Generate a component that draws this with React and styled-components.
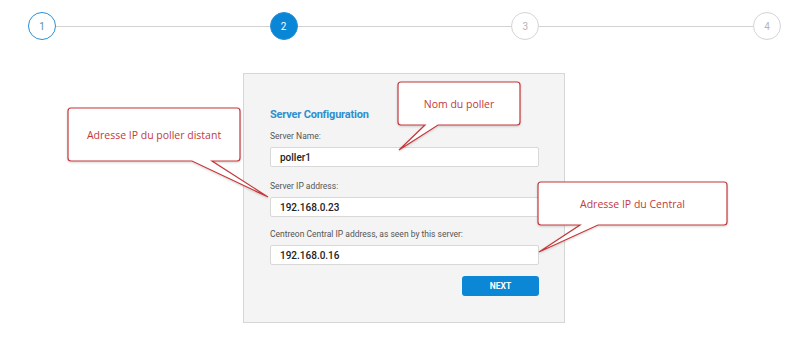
import React from 'react'
import styled, { createGlobalStyle } from 'styled-components'

const GlobalStyle = createGlobalStyle`
	html, body {
		margin: 0;
		padding: 0;
		background: #ffffff;
	}
	body {
		font-family: Roboto, "Liberation Sans", Arial, sans-serif;
	}
`

const Page = styled.div`
	position: relative;
	width: 800px;
	height: 342px;
	overflow: hidden;
	background: #ffffff;
`

const Stepper = styled.div`
	display: flex;
	align-items: center;
	padding: 12px 19px 0 28px;
`

const Step = styled.div`
	flex: none;
	width: 28px;
	height: 28px;
	box-sizing: border-box;
	border-radius: 50%;
	display: flex;
	align-items: center;
	justify-content: center;
	font-size: 10px;
	border: 1px solid ${p => (p.state === 'todo' ? '#d4d4d4' : '#2b8fd3')};
	background: ${p => (p.state === 'active' ? '#0a86d6' : '#ffffff')};
	color: ${p => (p.state === 'active' ? '#ffffff' : p.state === 'done' ? '#5a8fb3' : '#b5b5b5')};
`

const Line = styled.div`
	flex: 1;
	height: 1px;
	background: #d2d2d2;
`

const Card = styled.div`
	box-sizing: border-box;
	width: 322px;
	height: 250px;
	margin: 33px 0 0 243px;
	padding: 34px 25px 0 26px;
	background: #f4f4f4;
	border: 1px solid #d6d6d6;
	display: flex;
	flex-direction: column;
`

const Title = styled.div`
	font-size: 11px;
	font-weight: 700;
	letter-spacing: -0.2px;
	color: #2e8fcf;
	margin-bottom: 10px;
`

const Label = styled.div`
	font-size: 8.5px;
	color: #555555;
	margin-bottom: 6px;
`

const Input = styled.div`
	box-sizing: border-box;
	height: 20px;
	background: #ffffff;
	border: 1px solid #d8d8d8;
	border-radius: 2px;
	padding: 0 9px;
	display: flex;
	align-items: center;
	font-size: 10px;
	font-weight: 500;
	color: #222222;
	margin-bottom: ${p => p.gap}px;
`

const Actions = styled.div`
	display: flex;
	justify-content: flex-end;
	margin-top: 2px;
`

const Button = styled.div`
	width: 77px;
	height: 20px;
	border-radius: 3px;
	background: #0b87d6;
	color: #ffffff;
	font-size: 8.5px;
	font-weight: 700;
	display: flex;
	align-items: center;
	justify-content: center;
`

const Shapes = styled.svg`
	position: absolute;
	left: 0;
	top: 0;
	pointer-events: none;
`

const Note = styled.div`
	position: absolute;
	display: flex;
	align-items: center;
	justify-content: center;
	font-family: "Open Sans", "DejaVu Sans", sans-serif;
	font-size: 10.5px;
	color: #c2393b;
`

const callouts = [
	{ text: 'Adresse IP du poller distant', x: 68, y: 108, w: 172, h: 53, a: 192, b: 212, tx: 268, ty: 197 },
	{ text: 'Nom du poller', x: 398, y: 82, w: 122, h: 43, a: 425, b: 438, tx: 399, ty: 150 },
	{ text: 'Adresse IP du Central', x: 538, y: 182, w: 189, h: 43, a: 580, b: 598, tx: 539, ty: 252 }
]

const calloutPath = ({ x, y, w, h, a, b, tx, ty }) => {
	const r = 3
	const R = x + w
	const B = y + h
	return `M${x + r},${y} H${R - r} Q${R},${y} ${R},${y + r} V${B - r} Q${R},${B} ${R - r},${B} H${b} L${tx},${ty} L${a},${B} H${x + r} Q${x},${B} ${x},${B - r} V${y + r} Q${x},${y} ${x + r},${y} Z`
}

const App = () => (
	<Page>
		<GlobalStyle />
		<Stepper>
			<Step state="done">1</Step>
			<Line />
			<Step state="active">2</Step>
			<Line />
			<Step state="todo">3</Step>
			<Line />
			<Step state="todo">4</Step>
		</Stepper>
		<Card>
			<Title>Server Configuration</Title>
			<Label>Server Name:</Label>
			<Input gap={14}>poller1</Input>
			<Label>Server IP address:</Label>
			<Input gap={12}>192.168.0.23</Input>
			<Label>Centreon Central IP address, as seen by this server:</Label>
			<Input gap={9}>192.168.0.16</Input>
			<Actions>
				<Button>NEXT</Button>
			</Actions>
		</Card>
		<Shapes width="800" height="342">
			<defs>
				<filter id="sh" x="-10%" y="-10%" width="120%" height="130%">
					<feDropShadow dx="0" dy="1" stdDeviation="1" floodColor="#000" floodOpacity="0.18" />
				</filter>
			</defs>
			{callouts.map(c => (
				<path key={c.text} d={calloutPath(c)} fill="#ffffff" stroke="#c4393c" strokeWidth="1.2" filter="url(#sh)" />
			))}
		</Shapes>
		{callouts.map(c => (
			<Note key={c.text} style={{ left: c.x, top: c.y, width: c.w, height: c.h }}>
				{c.text}
			</Note>
		))}
	</Page>
)

export default App
